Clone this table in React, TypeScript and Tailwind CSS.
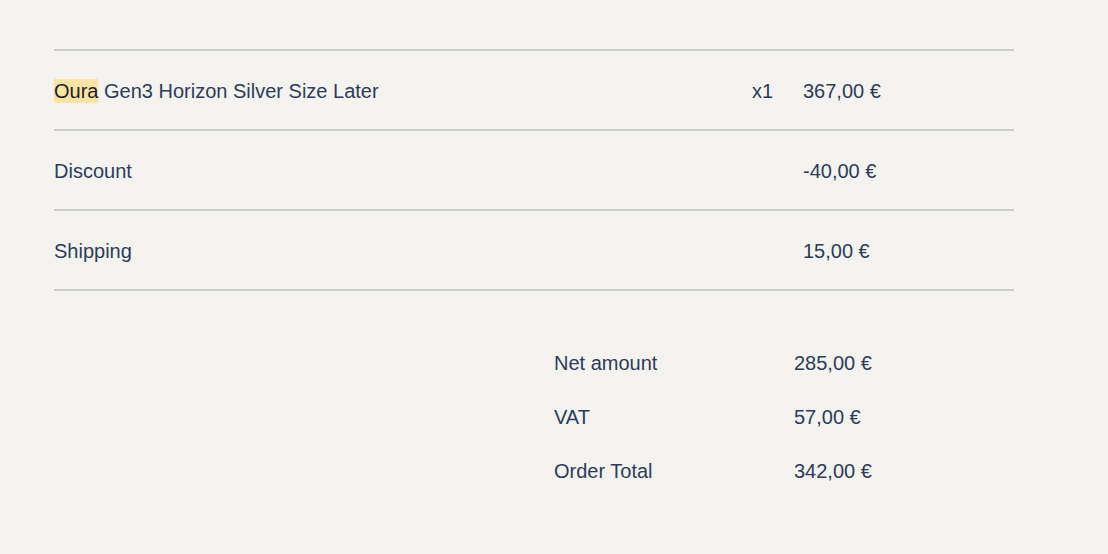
import React from "react";

const lines = [
  { name: "Gen3 Horizon Silver Size Later", brand: "Oura", qty: "x1", price: "367,00 €" },
  { name: "Discount", qty: "", price: "-40,00 €" },
  { name: "Shipping", qty: "", price: "15,00 €" },
];

const totals = [
  { label: "Net amount", value: "285,00 €" },
  { label: "VAT", value: "57,00 €" },
  { label: "Order Total", value: "342,00 €" },
];

export default function App() {
  return (
    <div
      className="min-h-[554px] w-full bg-[#f4f3ef] text-[#2d3c5a] text-[20px] pt-[49px] pl-[54px]"
      style={{ fontFamily: '"Liberation Sans", Arial, sans-serif' }}
    >
      <div className="w-[960px]">
        {/* Order lines */}
        <div className="border-t-2 border-[#cdcdc9]">
          {lines.map((line) => (
            <div key={line.name} className="flex items-center h-[80px] pt-[2px] border-b-2 border-[#cdcdc9]">
              <div className="flex-1">
                {line.brand && (
                  <span className="bg-[#fbe3a3] text-[#1e1e1e] py-[1px]">{line.brand}</span>
                )}
                {line.brand ? " " : ""}
                {line.name}
              </div>
              <div className="w-[51px]">{line.qty}</div>
              <div className="w-[211px]">{line.price}</div>
            </div>
          ))}
        </div>

        {/* Totals */}
        <div className="pl-[500px] pt-[45px]">
          {totals.map((t) => (
            <div key={t.label} className="flex items-center h-[54px]">
              <div className="w-[240px]">{t.label}</div>
              <div>{t.value}</div>
            </div>
          ))}
        </div>
      </div>
    </div>
  );
}
